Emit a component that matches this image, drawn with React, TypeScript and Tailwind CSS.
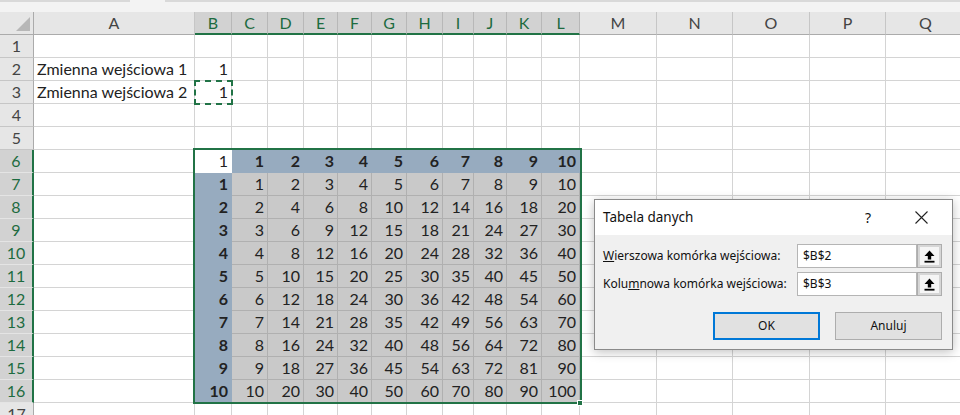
import React from "react";

const COLS = ["A","B","C","D","E","F","G","H","I","J","K","L","M","N","O","P","Q"];
const SEL = new Set(["B","C","D","E","F","G","H","I","J","K","L"]);

function UpIcon() {
  return (
    <svg width="11" height="13" viewBox="0 0 11 13">
      <polygon points="5.5,0.5 10.5,6 7.2,6 7.2,9.5 3.8,9.5 3.8,6 0.5,6" fill="#000" />
      <rect x="0.5" y="10.8" width="10" height="1.8" fill="#000" />
    </svg>
  );
}

function cellInfo(r: number, ci: number): { text: string; bg: string; border: string; bold: boolean } {
  let text = "";
  let bg = "bg-white";
  let border = "border-[#d4d4d4]";
  let bold = false;
  if (ci === 0) {
    if (r === 2) text = "Zmienna wejściowa 1";
    if (r === 3) text = "Zmienna wejściowa 2";
  }
  if (ci === 1 && (r === 2 || r === 3)) text = "1";
  if (r >= 6 && r <= 16 && ci >= 1 && ci <= 11) {
    const col = ci;
    if (r === 6 && col === 1) {
      text = "1";
      bg = "bg-white";
      border = "border-white";
    } else if (r === 6) {
      text = String(col - 1);
      bg = "bg-[#97abbf]";
      border = "border-[#97abbf]";
      bold = true;
    } else if (col === 1) {
      text = String(r - 6);
      bg = "bg-[#97abbf]";
      border = "border-[#97abbf]";
      bold = true;
    } else {
      text = String((r - 6) * (col - 1));
      bg = "bg-[#c9c9c9]";
      border = "border-[#b0b0b0]";
    }
  }
  return { text, bg, border, bold };
}

export default function App() {
  const rows = Array.from({ length: 17 }, (_, i) => i + 1);
  return (
    <div className="relative w-[960px] h-[415px] overflow-hidden bg-white" style={{ fontFamily: "Lato, 'Liberation Sans', sans-serif" }}>
      {/* top strip */}
      <div className="h-[12px] bg-[#f3f3f3] flex items-start">
        <div className="h-[2px] w-[130px] bg-[#d9d9d9]" />
        <div className="h-[2px] w-[35px]" />
        <div className="h-[2px] flex-1 bg-[#d9d9d9]" />
      </div>
      <div className="grid grid-cols-[34px_161px_37px_36px_36px_34px_34px_35px_36px_31px_33px_35px_38px_77px_76px_77px_76px_80px] auto-rows-[23px] text-[16px] text-[#222]">
        <div className="relative bg-[#e6e6e6] border-r border-b border-[#ababab]">
          <svg className="absolute right-[3px] bottom-[3px]" width="14" height="14" viewBox="0 0 14 14">
            <polygon points="14,0 14,14 0,14" fill="#b7b7b7" />
          </svg>
        </div>
        {COLS.map((c) => {
          const s = SEL.has(c);
          return (
            <div
              key={c}
              className={
                s
                  ? "flex items-center justify-center bg-[#d2d2d2] text-[#1d6b40] border-r border-r-[#b8b8b8] border-b-2 border-b-[#217346]"
                  : "flex items-center justify-center bg-[#e6e6e6] text-[#444] border-r border-r-[#c6c6c6] border-b border-b-[#ababab]"
              }
            >
              {c}
            </div>
          );
        })}
        {rows.map((r) => {
          const sel = r >= 6 && r <= 16;
          return (
            <React.Fragment key={r}>
              <div
                className={
                  sel
                    ? "flex items-center justify-center bg-[#d2d2d2] text-[#1d6b40] border-r-2 border-r-[#217346] border-b border-b-[#e4e4e4]"
                    : "flex items-center justify-center bg-[#e6e6e6] text-[#444] border-r border-r-[#ababab] border-b border-b-[#c6c6c6]"
                }
              >
                {r}
              </div>
              {COLS.map((c, ci) => {
                const info = cellInfo(r, ci);
                const right = info.text !== "" && !(ci === 0);
                return (
                  <div
                    key={c}
                    className={`flex items-center border-r border-b whitespace-nowrap overflow-visible ${info.bg} ${info.border} ${right ? "justify-end pr-[3px]" : "pl-[3px]"} ${info.bold ? "font-bold" : ""}`}
                  >
                    {info.text}
                  </div>
                );
              })}
            </React.Fragment>
          );
        })}
      </div>

      {/* marching ants around B3 */}
      <div className="absolute left-[194px] top-[80px] w-[39px] h-[25px] border-2 border-dashed border-[#217346]" />

      {/* selection border */}
      <div className="absolute left-[193px] top-[148px] w-[389px] h-[256px] border-2 border-[#217346]" />
      <div className="absolute left-[577px] top-[400px] w-[6px] h-[6px] bg-[#217346] border border-white" />

      {/* dialog */}
      <div
        className="absolute left-[594px] top-[199px] w-[359px] h-[151px] border border-[#8a8a8a] bg-[#f0f0f0] shadow-[0_2px_10px_rgba(0,0,0,0.25)] flex flex-col"
        style={{ fontFamily: "'Noto Sans', 'Open Sans', sans-serif" }}
      >
        <div className="h-[35px] bg-white flex items-center pl-[8px] text-[13.5px] text-[#111]">
          <span className="flex-1">Tabela danych</span>
          <span className="w-[30px] text-center text-[14px] mr-[32px]">?</span>
          <svg className="mr-[24px]" width="13" height="13" viewBox="0 0 13 13">
            <path d="M0.5 0.5 L12.5 12.5 M12.5 0.5 L0.5 12.5" stroke="#222" strokeWidth="1.1" />
          </svg>
        </div>
        <div className="flex flex-col pt-[9px] px-[10px] pl-[8px] text-[12px] text-[#111]">
          <div className="flex items-center h-[24px]">
            <span className="w-[194px]"><span className="underline">W</span>ierszowa komórka wejściowa:</span>
            <div className="flex h-[24px]">
              <div className="w-[120px] h-full bg-white border border-[#b5b5b5] flex items-center pl-[5px]">$B$2</div>
              <div className="w-[25px] h-full border border-[#adadad] bg-[#d6d6d6] p-[2px]">
                <div className="w-full h-full bg-[#f5f5f5] flex items-center justify-center">
                  <UpIcon />
                </div>
              </div>
            </div>
          </div>
          <div className="flex items-center h-[24px] mt-[4px]">
            <span className="w-[194px]">Kolu<span className="underline">m</span>nowa komórka wejściowa:</span>
            <div className="flex h-[24px]">
              <div className="w-[120px] h-full bg-white border border-[#b5b5b5] flex items-center pl-[5px]">$B$3</div>
              <div className="w-[25px] h-full border border-[#adadad] bg-[#d6d6d6] p-[2px]">
                <div className="w-full h-full bg-[#f5f5f5] flex items-center justify-center">
                  <UpIcon />
                </div>
              </div>
            </div>
          </div>
          <div className="flex justify-end gap-[15px] mt-[16px]">
            <div className="w-[107px] h-[28px] bg-[#e1e1e1] border-2 border-[#0078d7] flex items-center justify-center">OK</div>
            <div className="w-[107px] h-[28px] bg-[#e1e1e1] border border-[#adadad] flex items-center justify-center">Anuluj</div>
          </div>
        </div>
      </div>
    </div>
  );
}
